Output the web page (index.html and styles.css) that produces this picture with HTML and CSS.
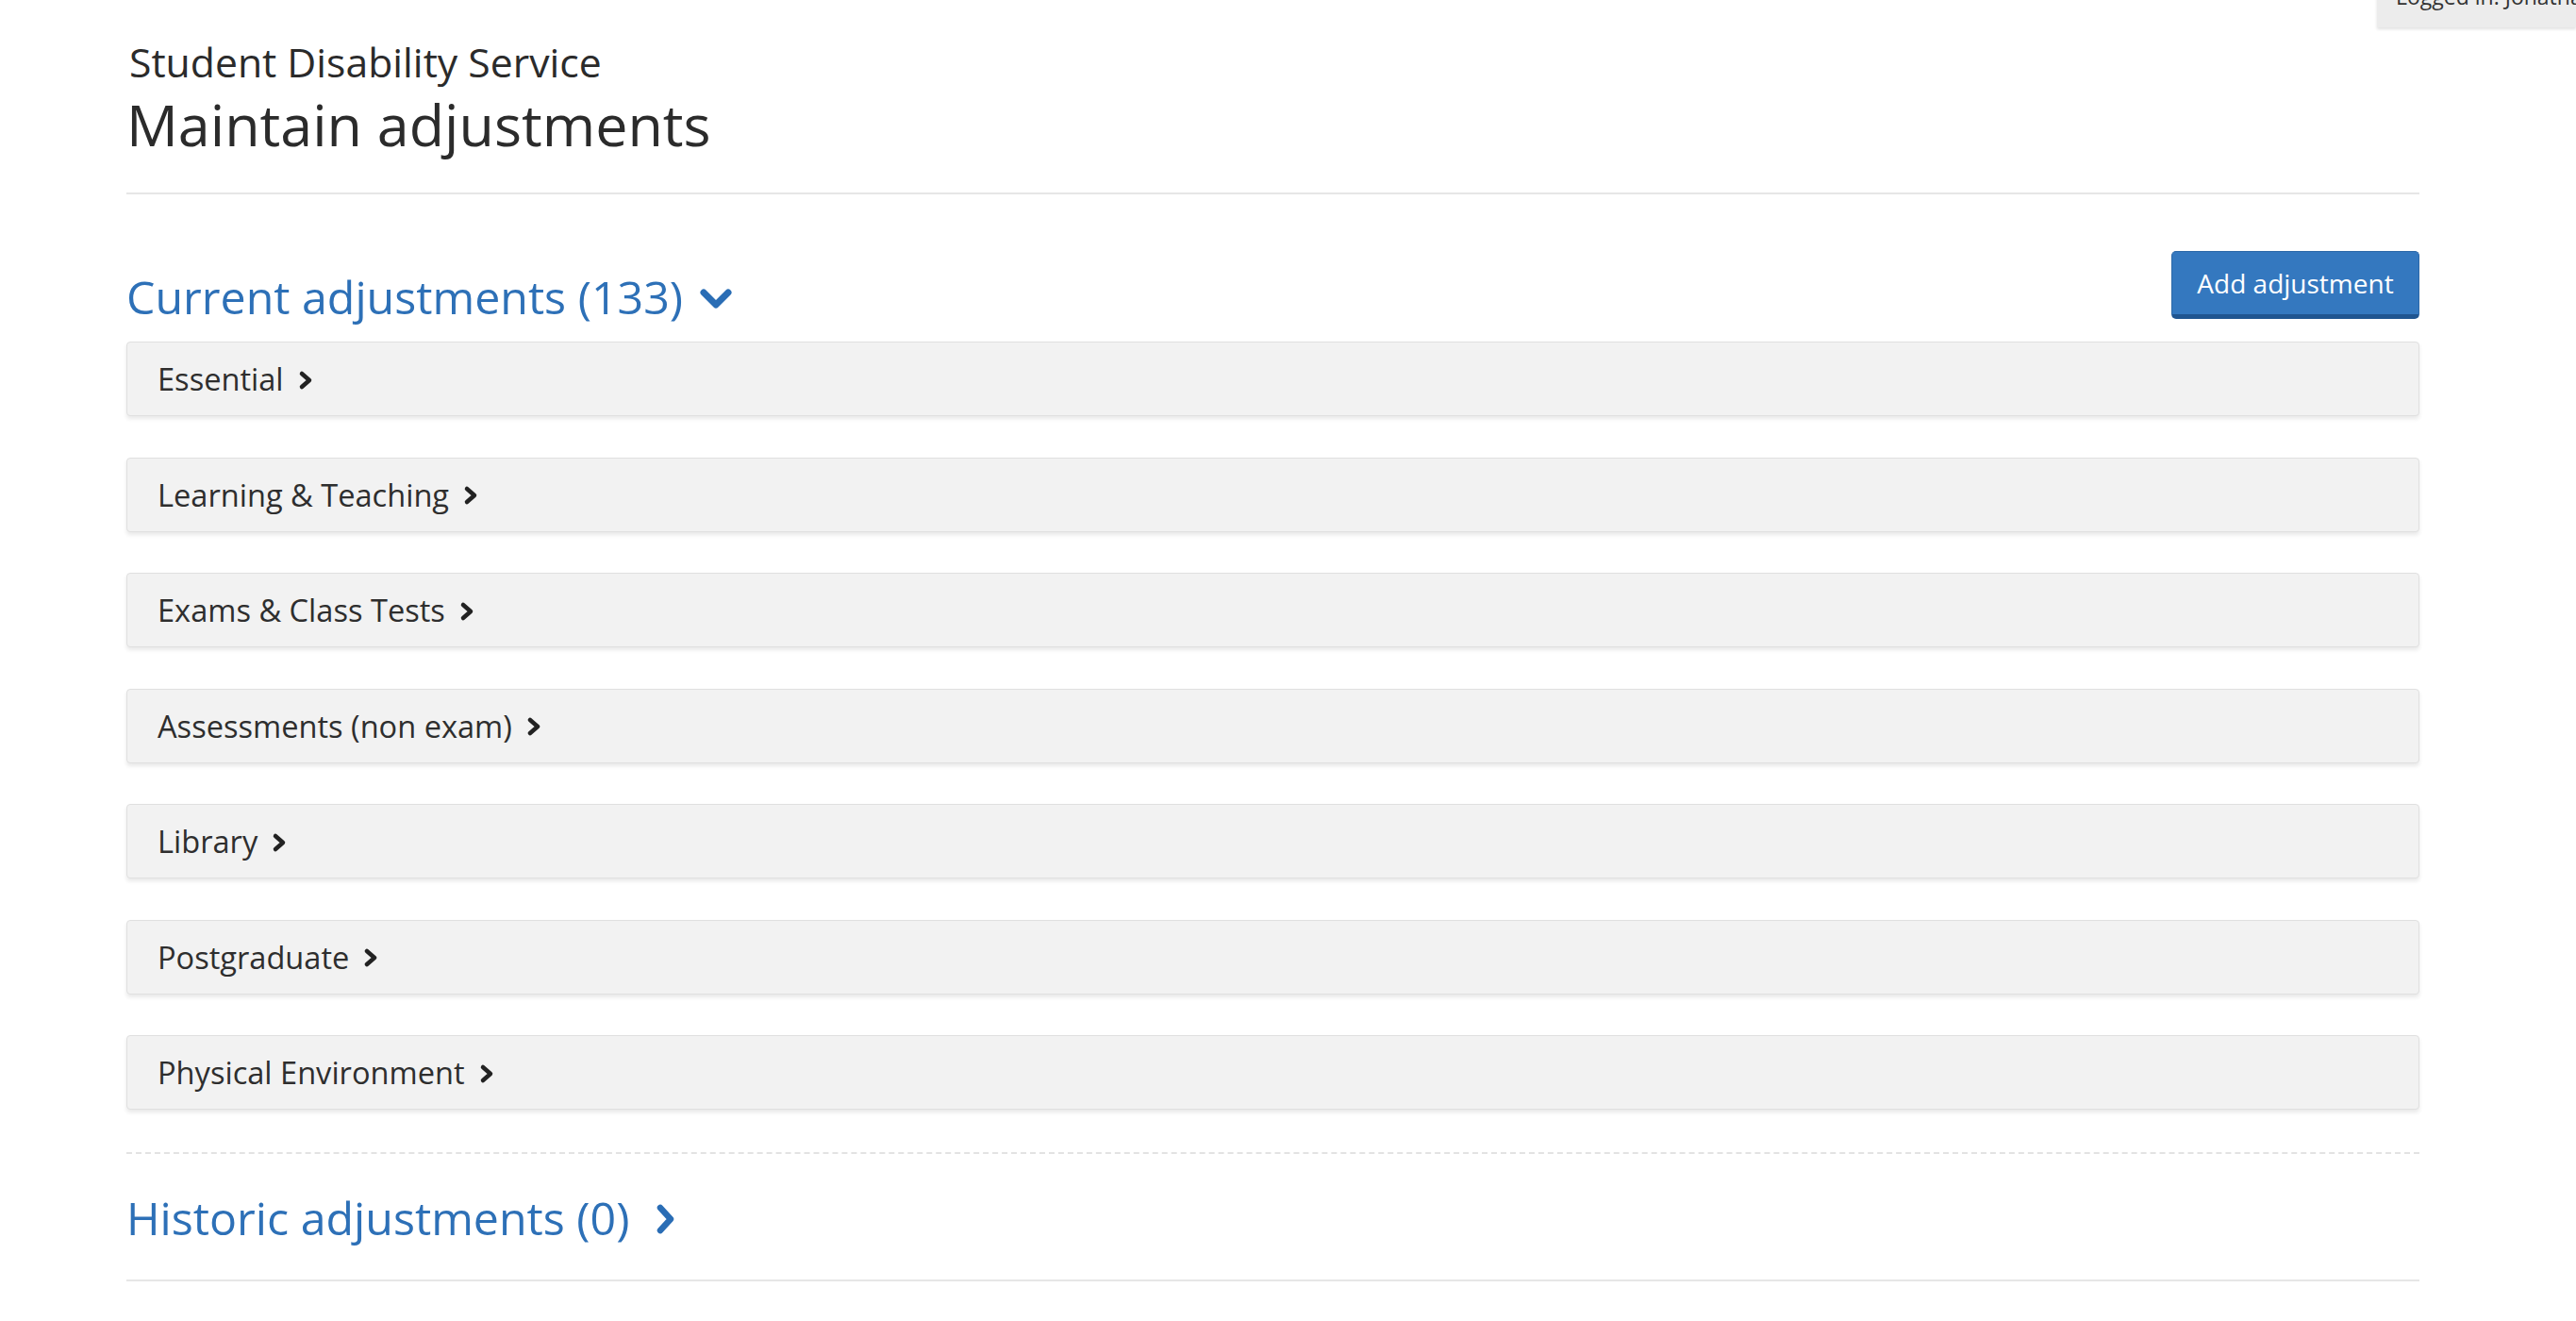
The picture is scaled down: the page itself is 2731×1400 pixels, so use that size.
FILE: index.html
```html
<!DOCTYPE html>
<html lang="en">
<head>
<meta charset="utf-8">
<title>Maintain adjustments</title>
<link rel="stylesheet" href="styles.css">
</head>
<body>
<div class="login-badge">Logged in: Jonathan</div>
<main class="page">
  <header class="page-header">
    <div class="subtitle">Student Disability Service</div>
    <h1 class="title">Maintain adjustments</h1>
  </header>

  <section class="current">
    <div class="section-head">
      <h2 class="section-title">Current adjustments (133)
        <svg class="chev-down" width="34" height="24" viewBox="0 0 34 24"><polyline points="4,5 17,18 30,5" fill="none" stroke="currentColor" stroke-width="7" stroke-linecap="round" stroke-linejoin="round"/></svg>
      </h2>
      <button class="btn-primary" type="button">Add adjustment</button>
    </div>
    <div class="panels">
      <div class="panel"><span class="panel-label">Essential</span><svg class="chev-right" width="16" height="22" viewBox="0 0 16 22"><polyline points="4,4 12,11 4,18" fill="none" stroke="currentColor" stroke-width="4.5" stroke-linecap="round" stroke-linejoin="round"/></svg></div>
      <div class="panel"><span class="panel-label">Learning &amp; Teaching</span><svg class="chev-right" width="16" height="22" viewBox="0 0 16 22"><polyline points="4,4 12,11 4,18" fill="none" stroke="currentColor" stroke-width="4.5" stroke-linecap="round" stroke-linejoin="round"/></svg></div>
      <div class="panel"><span class="panel-label">Exams &amp; Class Tests</span><svg class="chev-right" width="16" height="22" viewBox="0 0 16 22"><polyline points="4,4 12,11 4,18" fill="none" stroke="currentColor" stroke-width="4.5" stroke-linecap="round" stroke-linejoin="round"/></svg></div>
      <div class="panel"><span class="panel-label">Assessments (non exam)</span><svg class="chev-right" width="16" height="22" viewBox="0 0 16 22"><polyline points="4,4 12,11 4,18" fill="none" stroke="currentColor" stroke-width="4.5" stroke-linecap="round" stroke-linejoin="round"/></svg></div>
      <div class="panel"><span class="panel-label">Library</span><svg class="chev-right" width="16" height="22" viewBox="0 0 16 22"><polyline points="4,4 12,11 4,18" fill="none" stroke="currentColor" stroke-width="4.5" stroke-linecap="round" stroke-linejoin="round"/></svg></div>
      <div class="panel"><span class="panel-label">Postgraduate</span><svg class="chev-right" width="16" height="22" viewBox="0 0 16 22"><polyline points="4,4 12,11 4,18" fill="none" stroke="currentColor" stroke-width="4.5" stroke-linecap="round" stroke-linejoin="round"/></svg></div>
      <div class="panel"><span class="panel-label">Physical Environment</span><svg class="chev-right" width="16" height="22" viewBox="0 0 16 22"><polyline points="4,4 12,11 4,18" fill="none" stroke="currentColor" stroke-width="4.5" stroke-linecap="round" stroke-linejoin="round"/></svg></div>
    </div>
  </section>

  <section class="historic">
    <h2 class="section-title">Historic adjustments (0)
      <svg class="chev-right-lg" width="22" height="34" viewBox="0 0 22 34"><polyline points="5,5 16,17 5,29" fill="none" stroke="currentColor" stroke-width="6.5" stroke-linecap="round" stroke-linejoin="round"/></svg>
    </h2>
  </section>
</main>
</body>
</html>
```

FILE: styles.css
```css
* { box-sizing: border-box; }

html, body {
  margin: 0;
  padding: 0;
  background: #ffffff;
}

body {
  font-family: "Open Sans", "Liberation Sans", sans-serif;
  color: #333333;
  position: relative;
}

.login-badge {
  position: absolute;
  top: -19px;
  right: 0;
  width: 211px;
  height: 48px;
  padding: 0 0 0 20px;
  background: #ececec;
  box-shadow: 0 2px 3px rgba(0, 0, 0, 0.12);
  font-size: 23px;
  line-height: 30px;
  color: #333;
  white-space: nowrap;
  overflow: hidden;
}

.page {
  margin-left: 134px;
  width: 2431px;
}

.page-header {
  padding-top: 41px;
  padding-bottom: 39px;
  border-bottom: 2px solid #e6e6e6;
}

.subtitle {
  font-size: 42.7px;
  line-height: 50px;
  color: #2b2b2b;
  padding-left: 3px;
}

.title {
  margin: 8px 0 0 0;
  font-size: 61px;
  line-height: 66px;
  font-weight: 400;
  color: #2b2b2b;
}

.section-head {
  display: flex;
  justify-content: space-between;
  align-items: flex-start;
  margin-top: 60px;
}

.section-title {
  margin: 0;
  font-size: 48.3px;
  line-height: 58px;
  font-weight: 400;
  color: #2d70b7;
  display: flex;
  align-items: center;
}

.section-head .section-title {
  margin-top: 19px;
}

.chev-down {
  margin-left: 18px;
  margin-top: 6px;
  color: #2a6db5;
}

.btn-primary {
  width: 263px;
  height: 72px;
  border: 1px solid #2b68a8;
  border-bottom: 5px solid #1f5590;
  border-radius: 5px;
  background: #3478bf;
  color: #ffffff;
  font-family: "Open Sans", "Liberation Sans", sans-serif;
  font-size: 28px;
  padding: 0;
  line-height: 1;
}

.panels {
  margin-top: 19px;
  display: flex;
  flex-direction: column;
  gap: 43.5px;
}

.panel {
  height: 79px;
  display: flex;
  align-items: center;
  padding-left: 32px;
  background: #f2f2f2;
  border: 1px solid #e0e0e0;
  border-radius: 4px;
  box-shadow: 0 3px 4px rgba(0, 0, 0, 0.09);
  font-size: 32.6px;
  color: #2e2e2e;
}

.chev-right {
  margin-left: 15px;
  margin-top: 2px;
  color: #222222;
}

.historic {
  margin-top: 45px;
  border-top: 2px dashed #e3e3e3;
  border-bottom: 2px solid #e6e6e6;
  padding-top: 38px;
  padding-bottom: 37px;
}

.chev-right-lg {
  margin-left: 28px;
  margin-top: 4px;
  color: #2a6db5;
}
```
